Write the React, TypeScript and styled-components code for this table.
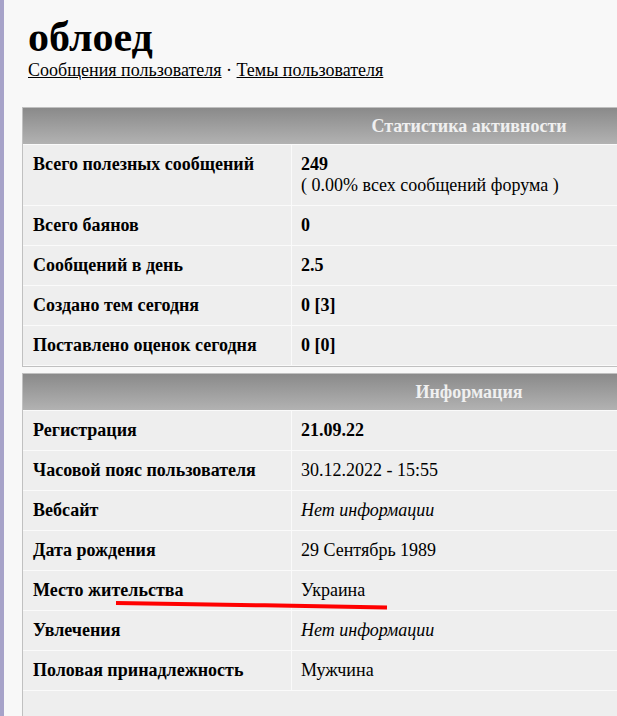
import React from "react";
import styled, { createGlobalStyle } from "styled-components";

const Global = createGlobalStyle`
  html, body {
    margin: 0;
    padding: 0;
    background: #f8f8f8;
    overflow: hidden;
  }
  body {
    font-family: "Liberation Serif", "Times New Roman", serif;
    color: #000;
  }
`;

const Page = styled.div`
  position: relative;
  min-height: 716px;
  border-left: 4px solid #a7a3c9;
  padding: 0 0 0 18px;
  width: 1000px;
`;

const Title = styled.h1`
  margin: 0;
  padding: 14px 0 0 6px;
  font-size: 42px;
  font-weight: bold;
  line-height: 46px;
`;

const Links = styled.div`
  padding: 0 0 0 6px;
  font-size: 18px;
  line-height: 21px;
  a {
    color: #000;
    text-decoration: underline;
  }
`;

const Table = styled.table<{ $top: number }>`
  width: 894px;
  margin-top: ${(p) => p.$top}px;
  border: 1px solid #c0c0c0;
  border-collapse: separate;
  border-spacing: 0;
  background: #eeeeee;
  font-size: 18px;
`;

const HeadCell = styled.th`
  height: 36px;
  padding: 0;
  background: linear-gradient(#8a8a8a, #b2b2b2);
  color: #f0f0f0;
  font-size: 18px;
  font-weight: bold;
  text-align: center;
  border-bottom: 1px solid #fafafa;
`;

const Label = styled.td`
  width: 258px;
  padding: 9px 0 9px 10px;
  line-height: 21px;
  font-weight: bold;
  vertical-align: top;
  border-right: 1px solid #fafafa;
  border-bottom: 1px solid #fafafa;
`;

const Value = styled.td<{ $bold?: boolean; $italic?: boolean }>`
  padding: 9px 9px 9px 9px;
  line-height: 21px;
  vertical-align: top;
  font-weight: ${(p) => (p.$bold ? "bold" : "normal")};
  font-style: ${(p) => (p.$italic ? "italic" : "normal")};
  border-bottom: 1px solid #fafafa;
`;

const Filler = styled.td`
  height: 40px;
`;

const Mark = styled.svg`
  position: absolute;
  left: -4px;
  top: 0;
  pointer-events: none;
`;

type Row = { label: string; value: React.ReactNode; bold?: boolean; italic?: boolean };

const stats: Row[] = [
  {
    label: "Всего полезных сообщений",
    value: (
      <>
        <b>249</b>
        <br />( 0.00% всех сообщений форума )
      </>
    ),
  },
  { label: "Всего баянов", value: "0", bold: true },
  { label: "Сообщений в день", value: "2.5", bold: true },
  { label: "Создано тем сегодня", value: "0 [3]", bold: true },
  { label: "Поставлено оценок сегодня", value: "0 [0]", bold: true },
];

const info: Row[] = [
  { label: "Регистрация", value: "21.09.22", bold: true },
  { label: "Часовой пояс пользователя", value: "30.12.2022 - 15:55" },
  { label: "Вебсайт", value: "Нет информации", italic: true },
  { label: "Дата рождения", value: "29 Сентябрь 1989" },
  { label: "Место жительства", value: "Украина" },
  { label: "Увлечения", value: "Нет информации", italic: true },
  { label: "Половая принадлежность", value: "Мужчина" },
];

function Section({ title, rows, top, filler }: { title: string; rows: Row[]; top: number; filler?: boolean }) {
  return (
    <Table $top={top}>
      <thead>
        <tr>
          <HeadCell colSpan={2}>{title}</HeadCell>
        </tr>
      </thead>
      <tbody>
        {rows.map((r) => (
          <tr key={r.label}>
            <Label>{r.label}</Label>
            <Value $bold={r.bold} $italic={r.italic}>
              {r.value}
            </Value>
          </tr>
        ))}
        {filler && (
          <tr>
            <Filler colSpan={2} />
          </tr>
        )}
      </tbody>
    </Table>
  );
}

export default function App() {
  return (
    <>
      <Global />
      <Page>
        <Title>облоед</Title>
        <Links>
          <a href="#">Сообщения пользователя</a> · <a href="#">Темы пользователя</a>
        </Links>
        <Section title="Статистика активности" rows={stats} top={26} />
        <Section title="Информация" rows={info} top={6} filler />
        <Mark width="617" height="716" viewBox="0 0 617 716">
          <path
            d="M116 603 C 200 604, 300 606, 387 607.5"
            stroke="#ff0000"
            strokeWidth="4"
            fill="none"
            strokeLinecap="butt"
          />
        </Mark>
      </Page>
    </>
  );
}
